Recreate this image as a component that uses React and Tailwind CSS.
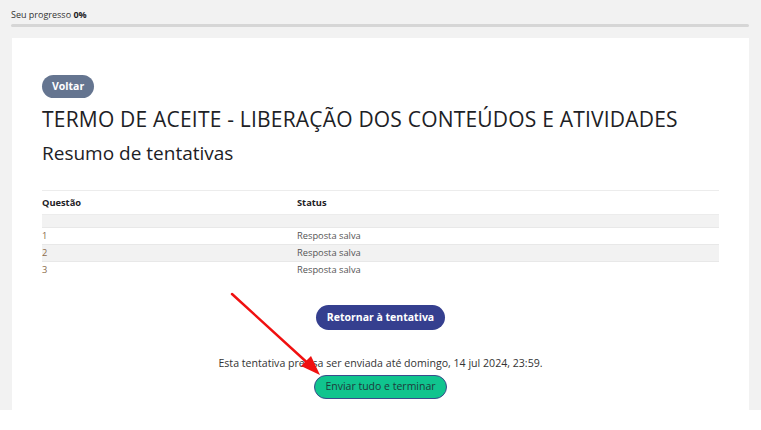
import React from 'react';

// ── Summary table data ────────────────────────────────────────────────────────
const rows = [
  { q: '1', status: 'Resposta salva' },
  { q: '2', status: 'Resposta salva' },
  { q: '3', status: 'Resposta salva' },
];

// ── Red annotation arrow ──────────────────────────────────────────────────────
function Arrow() {
  return (
    <svg className="absolute left-0 top-0 pointer-events-none" width="761" height="430">
      <line x1="232" y1="294" x2="312" y2="367" stroke="#f01010" strokeWidth="2.5" strokeLinecap="round" />
      <polygon points="320,375 301,366 311,356" fill="#f01010" />
    </svg>
  );
}

export default function App() {
  return (
    <div
      className="relative w-[761px] h-[430px] bg-white overflow-hidden text-[#1d2125]"
      style={{ fontFamily: '"Open Sans", "Noto Sans", sans-serif' }}
    >
      <div className="h-[410px] bg-[#f2f2f2] pl-[12px] pr-[12px] flex flex-col">
        <p className="pt-[9px] -ml-[1px] text-[9px] leading-[12px] text-[#333]">
          Seu progresso <b className="text-[#1d2125]">0%</b>
        </p>
        <div className="mt-[3px] -ml-[1px] h-[3px] rounded-full bg-[#d6d6d6]" />
        <div className="mt-[11px] flex-1 bg-white px-[30px] pt-[37px]">
          <button className="block h-[23px] px-[10px] rounded-full bg-[#657590] text-white text-[10.5px] font-bold leading-none">
            Voltar
          </button>
          <h1 className="mt-[7px] text-[21px] leading-[28px] tracking-[0.2px]">
            TERMO DE ACEITE - LIBERAÇÃO DOS CONTEÚDOS E ATIVIDADES
          </h1>
          <h2 className="mt-[7px] text-[19px] leading-[26px]">Resumo de tentativas</h2>

          <table className="mt-[24px] w-full border-t border-[#ececec] text-[9.3px] text-[#555]">
            <thead>
              <tr className="h-[24px] border-b border-[#ececec]">
                <th className="w-[255px] text-left font-bold text-[#1d2125]">Questão</th>
                <th className="text-left font-bold text-[#1d2125]">Status</th>
              </tr>
            </thead>
            <tbody>
              <tr className="h-[13px] bg-[#f2f2f2] border-b border-[#e8e8e8]">
                <td />
                <td />
              </tr>
              {rows.map((r, i) => (
                <tr
                  key={r.q}
                  className={`h-[17px] ${i % 2 === 1 ? 'bg-[#f2f2f2] border-y border-[#e8e8e8]' : ''}`}
                >
                  <td className="text-[#8a6a4a]">{r.q}</td>
                  <td>{r.status}</td>
                </tr>
              ))}
            </tbody>
          </table>

          <div className="mt-[26px] flex flex-col items-center">
            <button className="h-[25px] px-[11px] rounded-full bg-[#353f8f] text-white text-[10.5px] font-bold leading-none">
              Retornar à tentativa
            </button>
            <p className="mt-[26px] text-[10.6px] leading-[14px] text-[#333]">
              Esta tentativa precisa ser enviada até domingo, 14 jul 2024, 23:59.
            </p>
            <button className="mt-[5px] h-[24px] px-[10px] rounded-full bg-[#10c48e] border border-[#3b4a8c] text-[#1f3a3a] text-[10.5px] leading-none">
              Enviar tudo e terminar
            </button>
          </div>
        </div>
      </div>
      <Arrow />
    </div>
  );
}
